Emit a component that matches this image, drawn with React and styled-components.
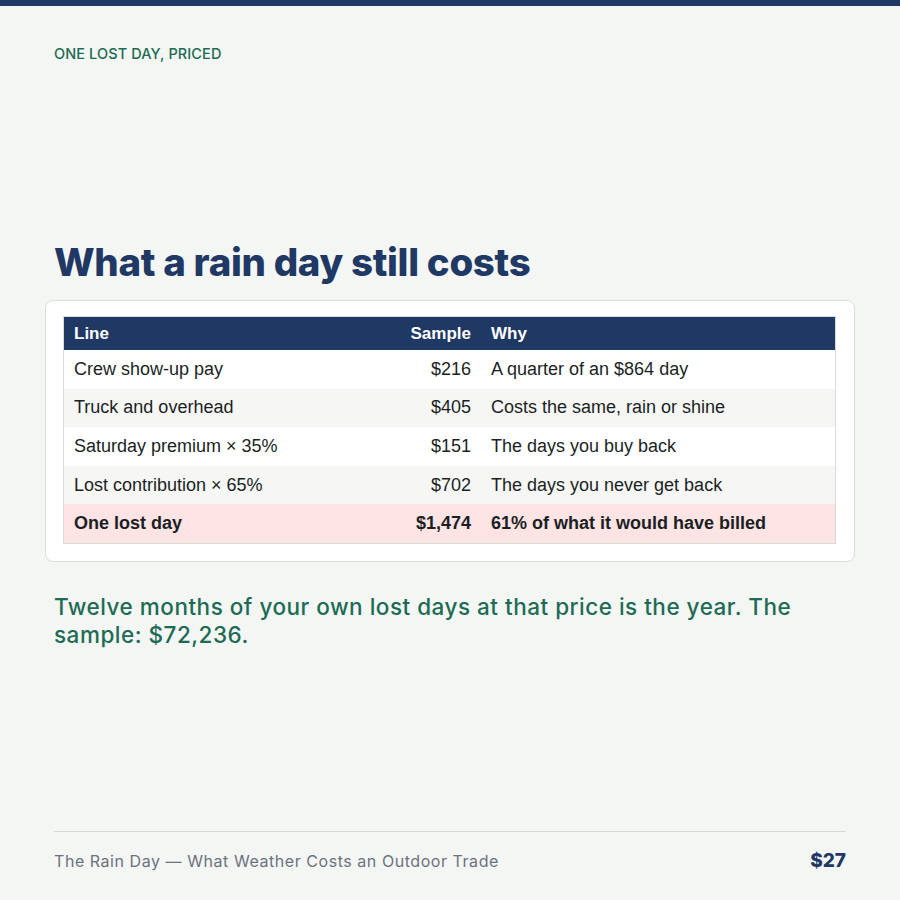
import React from "react";
import styled, { createGlobalStyle } from "styled-components";

const Global = createGlobalStyle`
  html, body { margin: 0; padding: 0; background: #f4f6f3; }
  #root { width: 900px; height: 900px; }
`;

const Page = styled.div`
  width: 900px;
  height: 900px;
  box-sizing: border-box;
  background: #f4f6f3;
  border-top: 6px solid #1f3864;
  display: flex;
  flex-direction: column;
  padding: 0 54px;
  font-family: Inter, "Noto Sans", sans-serif;
`;

const Eyebrow = styled.div`
  margin-top: 39px;
  font-size: 14.5px;
  font-weight: 500;
  color: #1d6b55;
  letter-spacing: 0.1px;
  line-height: 18px;
`;

const Middle = styled.div`
  flex: 1;
  display: flex;
  flex-direction: column;
  justify-content: center;
  padding-bottom: 6px;
`;

const Title = styled.h1`
  margin: 0 0 14px;
  font-size: 38.4px;
  font-weight: 800;
  color: #1f3864;
  line-height: 48px;
  letter-spacing: -0.3px;
`;

const Card = styled.div`
  margin: 0 -9px;
  background: #fff;
  border: 1px solid #dcdedb;
  border-radius: 8px;
  padding: 15px 18px 17px 17px;
`;

const Table = styled.table`
  width: 100%;
  border-collapse: collapse;
  border: 1px solid #d9dbd8;
  font-family: "Liberation Sans", Arial, sans-serif;
  font-size: 18px;
  color: #1b1f24;
`;

const HeadCell = styled.th`
  background: #1f3864;
  color: #fff;
  font-weight: 700;
  font-size: 17px;
  text-align: ${(p) => (p.$right ? "right" : "left")};
  padding: 0 10px;
  height: 33px;
  width: ${(p) => p.$w || "auto"};
  white-space: nowrap;
`;

const Row = styled.tr`
  background: ${(p) => (p.$total ? "#fce4e4" : p.$alt ? "#f6f7f4" : "#fff")};
  font-weight: ${(p) => (p.$total ? 700 : 400)};
`;

const Cell = styled.td`
  height: 38.6px;
  padding: 0 10px;
  text-align: ${(p) => (p.$right ? "right" : "left")};
  white-space: nowrap;
`;

const Note = styled.p`
  margin: 31px 0 0;
  max-width: 770px;
  font-size: 22.5px;
  font-weight: 500;
  line-height: 28.5px;
  letter-spacing: 0.5px;
  color: #1d6b55;
`;

const Footer = styled.div`
  border-top: 1px solid #d6d8d5;
  margin-bottom: 28px;
  padding-top: 17px;
  display: flex;
  justify-content: space-between;
  align-items: center;
`;

const FootText = styled.span`
  font-size: 16px;
  letter-spacing: 0.55px;
  color: #6b7280;
`;

const Price = styled.span`
  font-size: 19px;
  font-weight: 800;
  color: #1f3864;
`;

const rows = [
  ["Crew show-up pay", "$216", "A quarter of an $864 day"],
  ["Truck and overhead", "$405", "Costs the same, rain or shine"],
  ["Saturday premium × 35%", "$151", "The days you buy back"],
  ["Lost contribution × 65%", "$702", "The days you never get back"],
];

export default function App() {
  return (
    <>
      <Global />
      <Page>
        <Eyebrow>ONE LOST DAY, PRICED</Eyebrow>
        <Middle>
          <Title>What a rain day still costs</Title>
          <Card>
            <Table>
              <thead>
                <tr>
                  <HeadCell $w="316px">Line</HeadCell>
                  <HeadCell $right $w="61px">Sample</HeadCell>
                  <HeadCell>Why</HeadCell>
                </tr>
              </thead>
              <tbody>
                {rows.map((r, i) => (
                  <Row key={i} $alt={i % 2 === 1}>
                    <Cell>{r[0]}</Cell>
                    <Cell $right>{r[1]}</Cell>
                    <Cell>{r[2]}</Cell>
                  </Row>
                ))}
                <Row $total>
                  <Cell>One lost day</Cell>
                  <Cell $right>$1,474</Cell>
                  <Cell>61% of what it would have billed</Cell>
                </Row>
              </tbody>
            </Table>
          </Card>
          <Note>
            Twelve months of your own lost days at that price is the year. The
            sample: $72,236.
          </Note>
        </Middle>
        <Footer>
          <FootText>The Rain Day — What Weather Costs an Outdoor Trade</FootText>
          <Price>$27</Price>
        </Footer>
      </Page>
    </>
  );
}
